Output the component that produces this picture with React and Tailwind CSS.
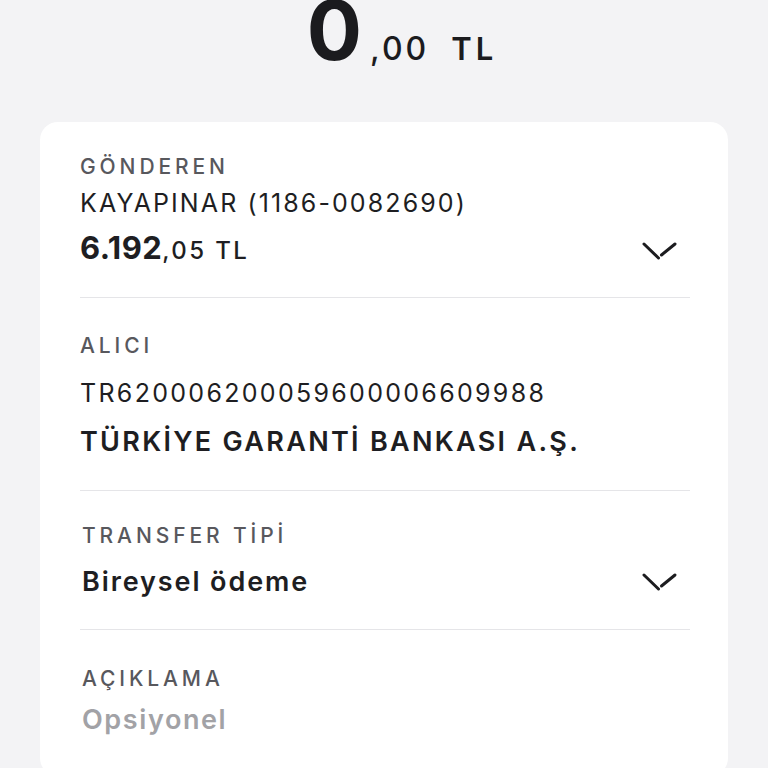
import React from 'react'

const font = { fontFamily: 'Inter, "Noto Sans", sans-serif' }

const Chevron = () => (
  <svg width="36" height="20" viewBox="0 0 36 20" className="shrink-0">
    <path d="M2 3 L16.5 17" stroke="#1c1c1f" strokeWidth="3" strokeLinecap="round" fill="none" />
    <path d="M19.5 14 L33 3" stroke="#1c1c1f" strokeWidth="3" strokeLinecap="round" fill="none" />
  </svg>
)

const Label = ({ children }) => (
  <div className="text-[21px] leading-[24px] tracking-[3.9px] text-[#58585d] font-medium">{children}</div>
)

const App = () => {
  return (
    <div className="min-h-screen bg-[#f3f3f5] overflow-hidden" style={font}>
      {/* Amount */}
      <div className="h-[122px] flex justify-center items-baseline pl-[36px] text-[#1b1b1e]">
        <span className="text-[82px] leading-[62px] font-bold tracking-[2px]">0</span>
        <span className="text-[32px] leading-[62px] font-medium ml-[6px] tracking-[3px]">,00</span>
        <span className="text-[31px] leading-[62px] font-semibold ml-[22px] tracking-[4px]">TL</span>
      </div>

      {/* Card */}
      <div className="mx-[40px] bg-white rounded-[18px] pl-[40px] pr-[38px] text-[#1e1e22]">
        {/* Sender */}
        <div className="pt-[33px] pb-[26px] border-b border-[#e5e5e8]">
          <Label>GÖNDEREN</Label>
          <div className="mt-[9px] text-[25px] leading-[30px] tracking-[2.1px]">KAYAPINAR (1186-0082690)</div>
          <div className="mt-[12px] flex items-center justify-between pr-[12px]">
            <div className="leading-[36px]">
              <span className="text-[31px] font-bold tracking-[0.5px]">6.192</span>
              <span className="text-[24px] font-medium tracking-[2.4px]">,05 TL</span>
            </div>
            <Chevron />
          </div>
        </div>

        {/* Receiver */}
        <div className="pt-[36px] pb-[32px] border-b border-[#e5e5e8]">
          <Label>ALICI</Label>
          <div className="mt-[20px] text-[25px] leading-[30px] tracking-[2.3px]">TR620006200059600006609988</div>
          <div className="mt-[18px] text-[27px] leading-[32px] font-semibold tracking-[2.3px]">TÜRKİYE GARANTİ BANKASI A.Ş.</div>
        </div>

        {/* Transfer type */}
        <div className="pt-[33px] pb-[31px] pl-[2px] border-b border-[#e5e5e8]">
          <Label>TRANSFER TİPİ</Label>
          <div className="mt-[18px] flex items-center justify-between pr-[12px]">
            <div className="text-[27px] leading-[32px] font-semibold tracking-[1.9px]">Bireysel ödeme</div>
            <Chevron />
          </div>
        </div>

        {/* Description */}
        <div className="pt-[37px] pb-[40px] pl-[2px]">
          <Label>AÇIKLAMA</Label>
          <div className="mt-[13px] text-[27px] leading-[32px] font-semibold tracking-[1.6px] text-[#a2a2a6]">Opsiyonel</div>
        </div>
      </div>
    </div>
  )
}

export default App
